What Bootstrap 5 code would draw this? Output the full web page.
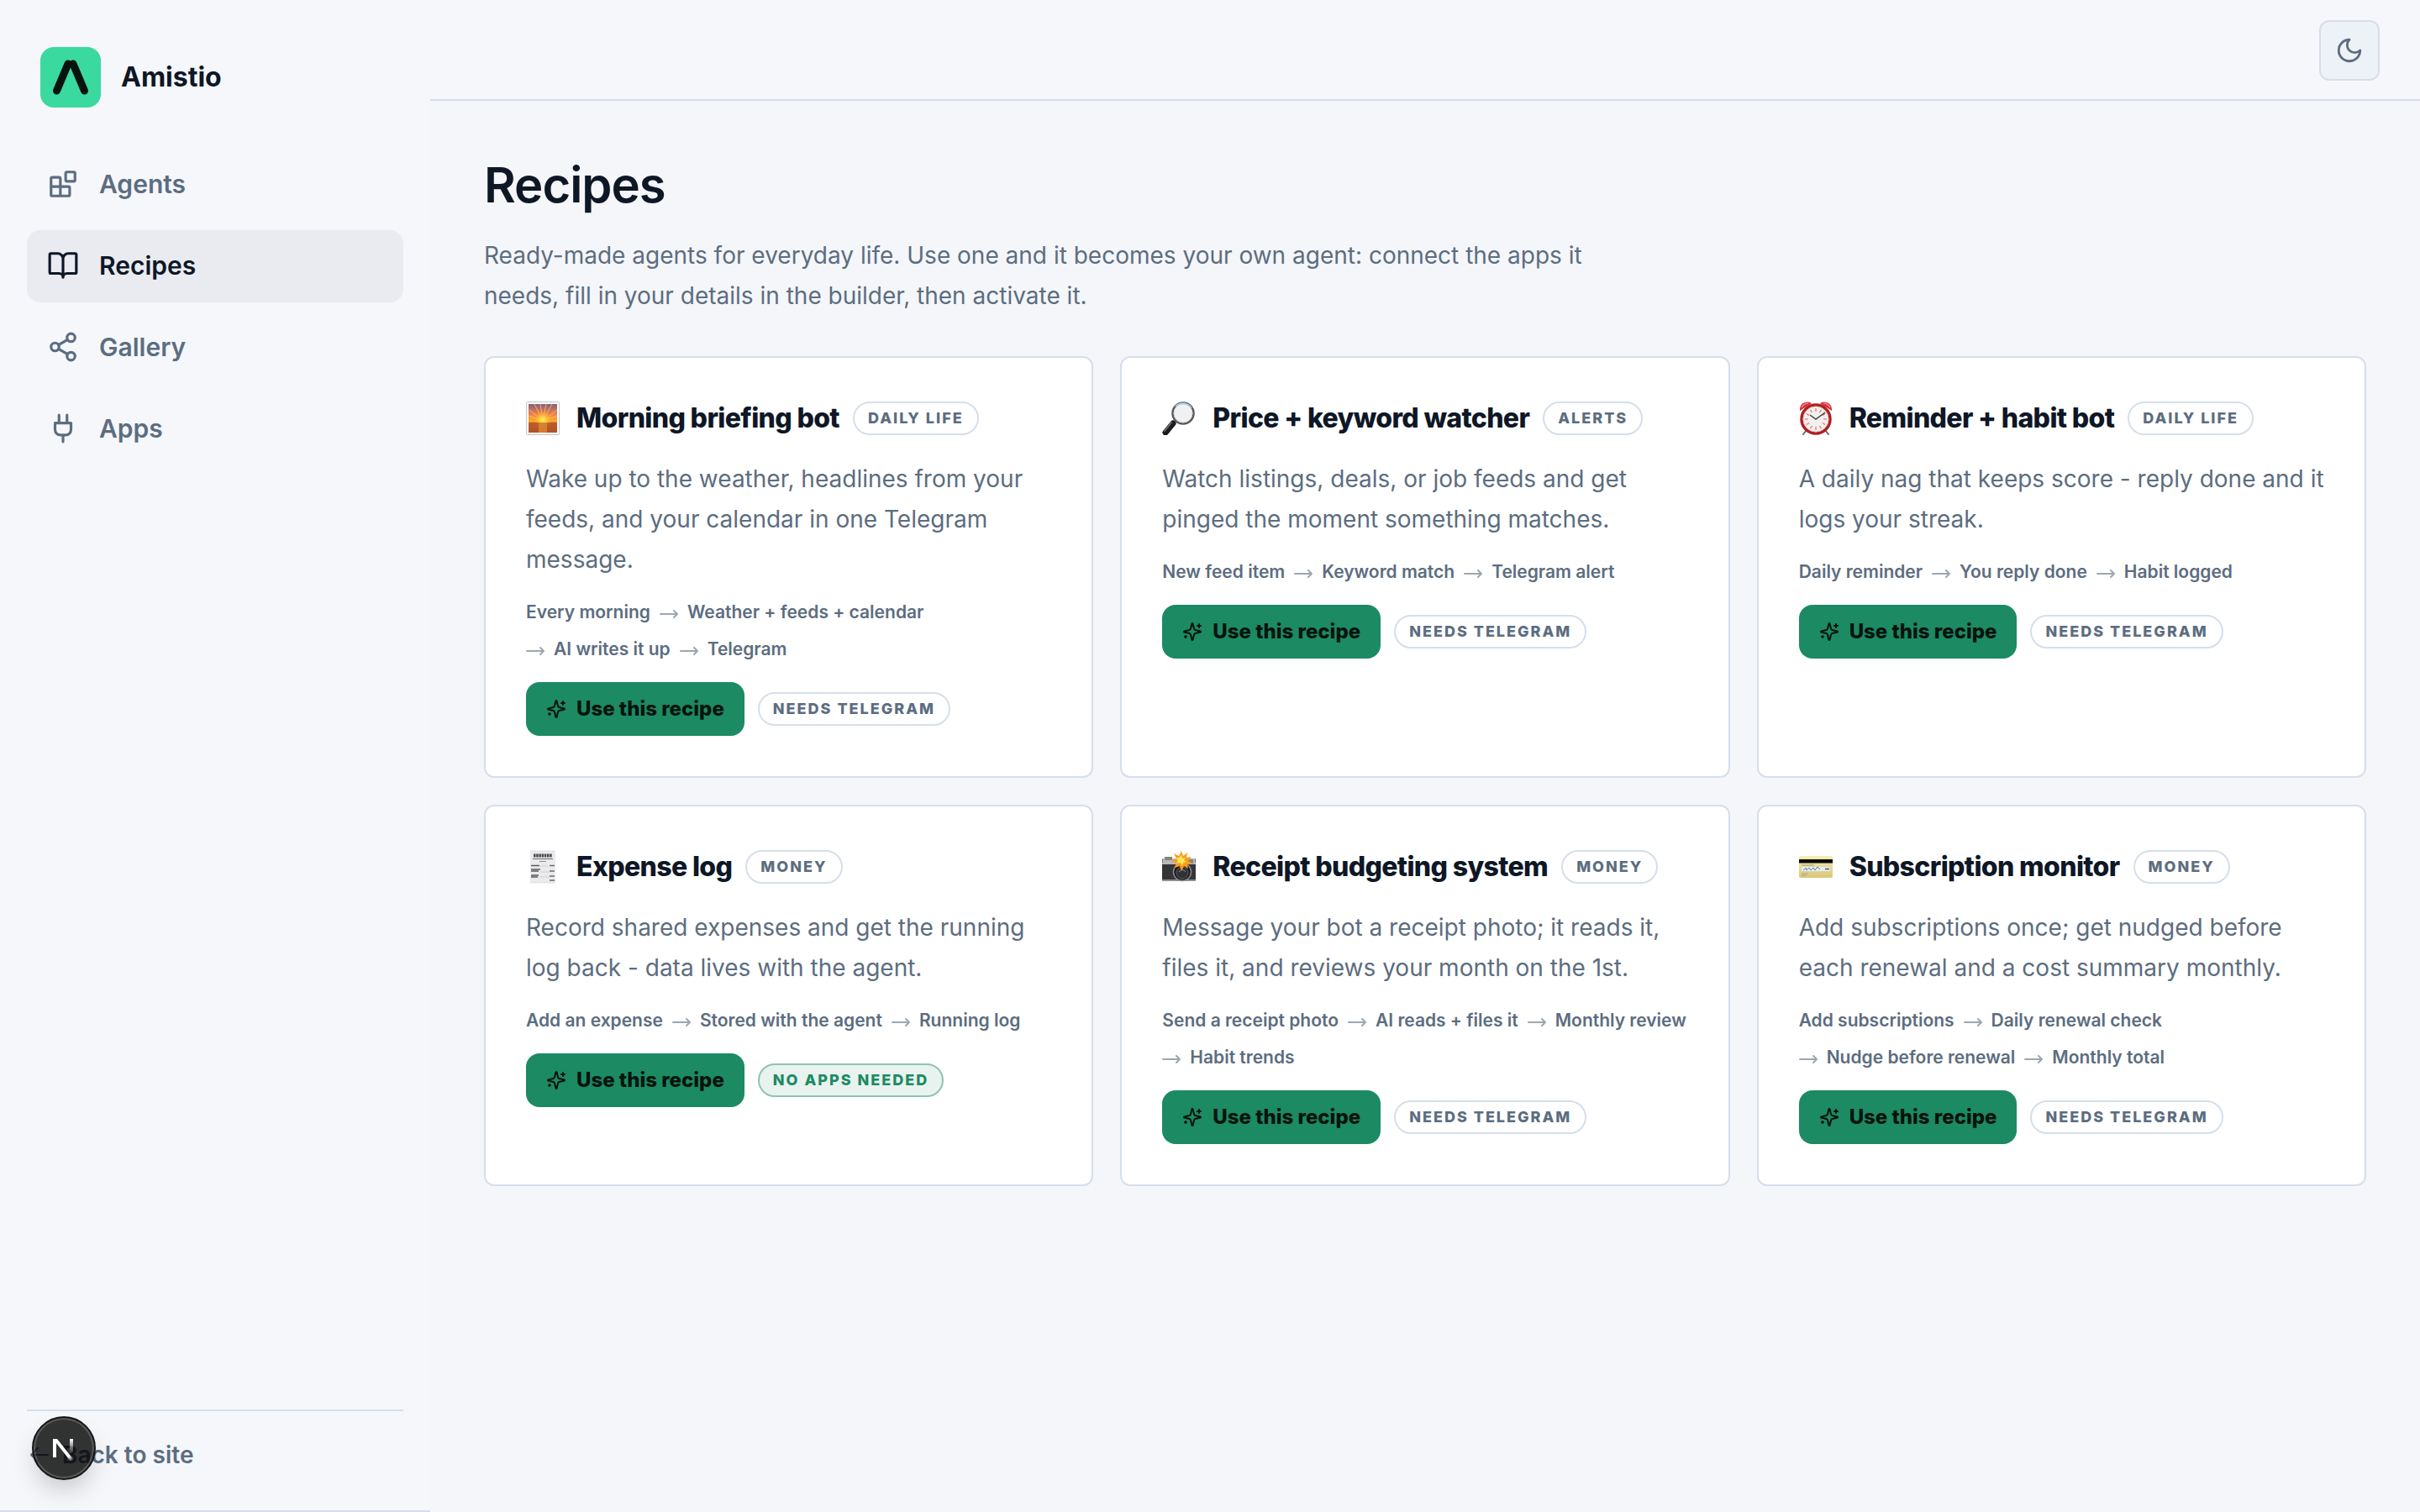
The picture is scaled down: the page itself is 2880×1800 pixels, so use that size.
<!DOCTYPE html>
<html lang="en">
<head>
<meta charset="utf-8">
<meta name="viewport" content="width=device-width, initial-scale=1">
<title>Recipes · Amistio</title>
<link href="https://cdn.jsdelivr.net/npm/bootstrap@5.3.0/dist/css/bootstrap.min.css" rel="stylesheet">
<style>
  :root { --ink: #0e1726; --soft: #5c6d80; --line: #d6deea; --green: #1c8a62; }
  body { font-family: Inter, "Liberation Sans", sans-serif; font-size: 28px; line-height: 48px; color: var(--ink); background: #f4f6fa; }
  a { text-decoration: none; }
  .ico { fill: none; stroke: currentColor; stroke-width: 2; stroke-linecap: round; stroke-linejoin: round; flex: none; }
  .side { width: 512px; padding: 56px 32px 42px; background: #f5f7fb; border-bottom: 2px solid var(--line); }
  .brand { gap: 24px; padding: 0 16px; font-size: 32px; line-height: 72px; font-weight: 700; color: var(--ink); }
  .side-nav { gap: 11px; margin-top: 49px; }
  .side-nav .nav-link { display: flex; align-items: center; gap: 24px; padding: 17px 24px 19px; font-size: 30px; line-height: 50px; font-weight: 600; color: var(--soft); border-radius: 16px; }
  .side-nav .nav-link.active { color: var(--ink); background: #e9ebf0; }
  .side-foot { border-top: 2px solid var(--line); padding: 28px 4px 0; }
  .side-foot a { gap: 16px; font-size: 28px; font-weight: 600; color: var(--soft); }
  .topbar { padding: 24px 48px 22px; background: #f5f7fb; border-bottom: 2px solid var(--line); }
  .theme-btn { width: 72px; height: 72px; padding: 0; border: 2px solid var(--line); border-radius: 12px; background: #edf2f7; color: var(--soft); }
  .content { padding: 64px; }
  .content h1 { font-size: 58px; line-height: 72px; font-weight: 600; letter-spacing: -1px; margin: 0 0 24px; }
  .intro { max-width: 1360px; margin: 0 0 48px; color: var(--soft); }
  .recipes { display: grid; grid-template-columns: repeat(3, minmax(0, 1fr)); gap: 32px; }
  .recipe { border: 2px solid var(--line); border-radius: 12px; background: #fff; padding: 48px; }
  .recipe h2 { font-size: 32px; line-height: 48px; font-weight: 800; letter-spacing: -.02em; margin: 0; }
  .recipe-head { gap: 16px; margin-bottom: 24px; }
  .recipe-head svg { width: 40px; height: 40px; margin-right: 4px; flex: none; }
  .recipe p { color: var(--soft); margin: 0 0 23px; }
  .steps { gap: 12px 11px; margin: 0 0 23px; padding: 0; list-style: none; font-size: 21px; line-height: 32px; font-weight: 600; color: var(--soft); }
  .steps li { display: flex; align-items: center; gap: 11px; }
  .steps svg { opacity: .6; }
  .tag { border: 2px solid var(--line); border-radius: 20px; padding: 0 16px; font-size: 18px; line-height: 36px; font-weight: 800; letter-spacing: 2px; color: var(--soft); }
  .tag-ok { color: var(--green); border-color: #8ec4b0; background: #e8f3ef; }
  .use-btn { display: flex; align-items: center; gap: 12px; height: 64px; padding: 0 24px; border: 0; border-radius: 16px; background: var(--green); color: #07130e; font-size: 24px; line-height: 32px; font-weight: 800; }
  .dev-badge { position: fixed; left: 38px; bottom: 38px; width: 76px; height: 76px; padding: 0; border: 2px solid #171717; border-radius: 50%; background: rgba(0, 0, 0, .8); box-shadow: inset 0 0 0 2px rgba(255, 255, 255, .2), 0 16px 32px -8px rgba(0, 0, 0, .24); }
</style>
</head>
<body>
<svg width="0" height="0" class="position-absolute" aria-hidden="true">
  <symbol id="spark" viewBox="0 0 24 24"><path d="M9.937 15.5A2 2 0 0 0 8.5 14.063l-6.135-1.582a.5.5 0 0 1 0-.962L8.5 9.936A2 2 0 0 0 9.937 8.5l1.582-6.135a.5.5 0 0 1 .963 0L14.063 8.5A2 2 0 0 0 15.5 9.937l6.135 1.581a.5.5 0 0 1 0 .964L15.5 14.063a2 2 0 0 0-1.437 1.437l-1.582 6.135a.5.5 0 0 1-.963 0zM20 3v4M22 5h-4M4 17v2M5 18H3"/></symbol>
  <symbol id="next" viewBox="0 0 22 16"><path d="M1 10h20M17 6l4 4-4 4"/></symbol>
</svg>
<div class="d-flex min-vh-100">
  <aside class="side d-flex flex-column flex-shrink-0">
    <a href="#" class="brand d-flex align-items-center">
      <svg width="72" height="72" viewBox="0 0 72 72" aria-hidden="true"><rect width="72" height="72" rx="16" fill="#3ad9a0"/><path d="M33 20 19.500 52M39 20 52.500 52" fill="none" stroke="#07130e" stroke-width="9" stroke-linecap="round"/></svg>
      <span>Amistio</span>
    </a>
    <nav class="side-nav nav flex-column" aria-label="Main">
      <a class="nav-link" href="#"><svg class="ico" width="38" height="38" viewBox="0 0 24 24"><rect width="7" height="7" x="14" y="3" rx="1"/><path d="M10 21V8a1 1 0 0 0-1-1H4a1 1 0 0 0-1 1v12a1 1 0 0 0 1 1h12a1 1 0 0 0 1-1v-5a1 1 0 0 0-1-1H3"/></svg>Agents</a>
      <a class="nav-link active" href="#" aria-current="page"><svg class="ico" width="38" height="38" viewBox="0 0 24 24"><path d="M12 7v14M3 18a1 1 0 0 1-1-1V4a1 1 0 0 1 1-1h5a4 4 0 0 1 4 4 4 4 0 0 1 4-4h5a1 1 0 0 1 1 1v13a1 1 0 0 1-1 1h-6a3 3 0 0 0-3 3 3 3 0 0 0-3-3z"/></svg>Recipes</a>
      <a class="nav-link" href="#"><svg class="ico" width="38" height="38" viewBox="0 0 24 24"><circle cx="18" cy="5" r="3"/><circle cx="6" cy="12" r="3"/><circle cx="18" cy="19" r="3"/><path d="m8.590 13.510 6.830 3.980M15.410 6.510l-6.820 3.980"/></svg>Gallery</a>
      <a class="nav-link" href="#"><svg class="ico" width="38" height="38" viewBox="0 0 24 24"><path d="M12 22v-5M9 8V2M15 8V2M18 8v5a4 4 0 0 1-4 4h-4a4 4 0 0 1-4-4V8Z"/></svg>Apps</a>
    </nav>
    <div class="side-foot mt-auto"><a class="d-flex align-items-center" href="#"><svg class="ico" width="22" height="22" viewBox="0 0 22 22" aria-hidden="true"><path d="M21 11H1M9 3l-8 8 8 8"/></svg>Back to site</a></div>
  </aside>
  <div class="flex-grow-1">
    <header class="topbar d-flex justify-content-end">
      <button type="button" class="theme-btn d-flex align-items-center justify-content-center" aria-label="Dark theme"><svg class="ico" width="34" height="34" viewBox="0 0 24 24"><path d="M12 3a6 6 0 0 0 9 9 9 9 0 1 1-9-9Z"/></svg></button>
    </header>
    <main class="content">
      <h1>Recipes</h1>
      <p class="intro">Ready-made agents for everyday life. Use one and it becomes your own agent: connect the apps it needs, fill in your details in the builder, then activate it.</p>
      <div class="recipes">
        <article class="recipe">
          <div class="recipe-head d-flex align-items-center">
            <svg viewBox="0 0 40 40" aria-hidden="true"><defs><linearGradient id="sky" x2="0" y2="1"><stop stop-color="#85617c"/><stop offset=".35" stop-color="#ef7f4b"/><stop offset=".62" stop-color="#ffb01f"/><stop offset=".64" stop-color="#d9772b"/><stop offset="1" stop-color="#a04a2c"/></linearGradient><radialGradient id="glow"><stop stop-color="#fff36a"/><stop offset=".4" stop-color="#ffc93a"/><stop offset="1" stop-color="#ff9a2e" stop-opacity="0"/></radialGradient></defs><rect x=".5" y=".5" width="39" height="39" rx="1" fill="#fff" stroke="#b9c9c9"/><rect x="3" y="3" width="34" height="34" fill="url(#sky)"/><path d="M20 23 4 10M20 23 10 3M20 23 17 3M20 23 24 3M20 23 31 3M20 23 37 10M20 23 3 17M20 23 37 17" stroke="#ffc46a" stroke-width="1" opacity=".8"/><circle cx="20" cy="22" r="11" fill="url(#glow)"/><rect x="3" y="25" width="34" height="12" fill="#b3562a" opacity=".75"/><rect x="15" y="25" width="10" height="12" fill="#e58a2e" opacity=".7"/></svg>
            <h2>Morning briefing bot</h2><span class="tag">DAILY LIFE</span>
          </div>
          <p>Wake up to the weather, headlines from your feeds, and your calendar in one Telegram message.</p>
          <ul class="steps d-flex flex-wrap"><li>Every morning</li><li><svg class="ico" width="22" height="16"><use href="#next"/></svg>Weather + feeds + calendar</li><li><svg class="ico" width="22" height="16"><use href="#next"/></svg>AI writes it up</li><li><svg class="ico" width="22" height="16"><use href="#next"/></svg>Telegram</li></ul>
          <div class="d-flex align-items-center gap-3"><button type="button" class="use-btn"><svg class="ico" width="24" height="24"><use href="#spark"/></svg>Use this recipe</button><span class="tag">NEEDS TELEGRAM</span></div>
        </article>
        <article class="recipe">
          <div class="recipe-head d-flex align-items-center">
            <svg viewBox="0 0 40 40" aria-hidden="true"><path d="m17 22-3 4" stroke="#9a9a9a" stroke-width="3"/><path d="M13 26 4 37" stroke="#1c1c1e" stroke-width="7" stroke-linecap="round"/><path d="M11 25 3 35" stroke="#66696d" stroke-width="2" stroke-linecap="round"/><circle cx="25" cy="14" r="12.500" fill="#f1f1f3" stroke="#55585c" stroke-width="2.500"/><path d="M16 6a12 12 0 0 1 19 2" fill="none" stroke="#9cc4ec" stroke-width="2"/><circle cx="25" cy="14" r="11" fill="none" stroke="#d4d6d8"/></svg>
            <h2>Price + keyword watcher</h2><span class="tag">ALERTS</span>
          </div>
          <p>Watch listings, deals, or job feeds and get pinged the moment something matches.</p>
          <ul class="steps d-flex flex-wrap"><li>New feed item</li><li><svg class="ico" width="22" height="16"><use href="#next"/></svg>Keyword match</li><li><svg class="ico" width="22" height="16"><use href="#next"/></svg>Telegram alert</li></ul>
          <div class="d-flex align-items-center gap-3"><button type="button" class="use-btn"><svg class="ico" width="24" height="24"><use href="#spark"/></svg>Use this recipe</button><span class="tag">NEEDS TELEGRAM</span></div>
        </article>
        <article class="recipe">
          <div class="recipe-head d-flex align-items-center">
            <svg viewBox="0 0 40 40" aria-hidden="true"><path d="m9 34-4 5M31 34l4 5" stroke="#6a6a6a" stroke-width="2" stroke-linecap="round"/><path d="M1 11C0 3 8-2 15 2zM39 11C40 3 32-2 25 2z" fill="#d5303a"/><path d="M3 7q3-5 8-5M37 7q-3-5-8-5" fill="none" stroke="#ef8388" stroke-width="1.500"/><circle cx="20" cy="21" r="17" fill="#f2f0ee" stroke="#b01f24" stroke-width="3.500"/><circle cx="20" cy="21" r="15" fill="none" stroke="#d9c9c4"/><path d="M20 8v4M20 30v4M7 21h4M29 21h4M13.500 10l2 3M26.500 10l-2 3M13.500 32l2-3M26.500 32l-2-3M9 14.500l3 2M31 14.500l-3 2M9 27.500l3-2M31 27.500l-3-2" stroke="#ee6a5e" stroke-width="1.200"/><path d="m13 16 7 5 11-8" fill="none" stroke="#3e4540" stroke-width="1.500"/></svg>
            <h2>Reminder + habit bot</h2><span class="tag">DAILY LIFE</span>
          </div>
          <p>A daily nag that keeps score - reply done and it logs your streak.</p>
          <ul class="steps d-flex flex-wrap"><li>Daily reminder</li><li><svg class="ico" width="22" height="16"><use href="#next"/></svg>You reply done</li><li><svg class="ico" width="22" height="16"><use href="#next"/></svg>Habit logged</li></ul>
          <div class="d-flex align-items-center gap-3"><button type="button" class="use-btn"><svg class="ico" width="24" height="24"><use href="#spark"/></svg>Use this recipe</button><span class="tag">NEEDS TELEGRAM</span></div>
        </article>
        <article class="recipe">
          <div class="recipe-head d-flex align-items-center">
            <svg viewBox="0 0 40 40" aria-hidden="true"><path d="M5 1h30v38H5z" fill="#ebebed"/><path d="M5 1h30M5 39h30" stroke="#cfcfd2" stroke-dasharray="1 1"/><path d="M9 6.500h22" stroke="#4b4b4d" stroke-width="4" stroke-dasharray="2.500 .7"/><path d="M8 10.500h24" stroke="#6b6b6d"/><path d="M16 13.500h8" stroke="#8b8b8d"/><path d="M6 18.500h10M6 23h11M6 25h9M6 30h9M6 32h8" stroke="#5b5b5d" stroke-width="1.500"/><path d="M17 19h10M18 26h9M16 32h11" stroke="#b5b5b8" stroke-dasharray="1 1"/><path d="M28 18.500h6M28 25h6M28 31h6M28 36h6" stroke="#6b6b6d" stroke-width="1.500"/></svg>
            <h2>Expense log</h2><span class="tag">MONEY</span>
          </div>
          <p>Record shared expenses and get the running log back - data lives with the agent.</p>
          <ul class="steps d-flex flex-wrap"><li>Add an expense</li><li><svg class="ico" width="22" height="16"><use href="#next"/></svg>Stored with the agent</li><li><svg class="ico" width="22" height="16"><use href="#next"/></svg>Running log</li></ul>
          <div class="d-flex align-items-center gap-3"><button type="button" class="use-btn"><svg class="ico" width="24" height="24"><use href="#spark"/></svg>Use this recipe</button><span class="tag tag-ok">NO APPS NEEDED</span></div>
        </article>
        <article class="recipe">
          <div class="recipe-head d-flex align-items-center">
            <svg viewBox="0 0 40 40" aria-hidden="true"><rect y="10" width="40" height="27" rx="1.500" fill="#353537"/><path d="M1 10h38l1 7H0z" fill="#b9b9b5"/><path d="M3 8h9v4H3zM29 11h8v5h-8z" fill="#87877f"/><path d="M0 35h40v2H0z" fill="#8f8f90"/><circle cx="24" cy="26" r="10.500" fill="#1b1b1d" stroke="#8a8a8c" stroke-width="1.500"/><circle cx="24" cy="27" r="7" fill="#303236" stroke="#5d5e61"/><path d="M20 26q4-5 8 0" fill="none" stroke="#8b8f94"/><path d="m23 1 2 6 5-4-1 6 6-1-4 5 5 3-6 1 1 5-5-3-3 6-2-6-6 2 2-6-6-2 6-3-3-6 6 3z" fill="#fb9c1c"/><path d="m23 6 1 4 4-1-2 3 3 2-4 1-1 4-2-4-5 1 2-4-3-2 4-1z" fill="#ffe75c"/></svg>
            <h2>Receipt budgeting system</h2><span class="tag">MONEY</span>
          </div>
          <p>Message your bot a receipt photo; it reads it, files it, and reviews your month on the 1st.</p>
          <ul class="steps d-flex flex-wrap"><li>Send a receipt photo</li><li><svg class="ico" width="22" height="16"><use href="#next"/></svg>AI reads + files it</li><li><svg class="ico" width="22" height="16"><use href="#next"/></svg>Monthly review</li><li><svg class="ico" width="22" height="16"><use href="#next"/></svg>Habit trends</li></ul>
          <div class="d-flex align-items-center gap-3"><button type="button" class="use-btn"><svg class="ico" width="24" height="24"><use href="#spark"/></svg>Use this recipe</button><span class="tag">NEEDS TELEGRAM</span></div>
        </article>
        <article class="recipe">
          <div class="recipe-head d-flex align-items-center">
            <svg viewBox="0 0 40 40" aria-hidden="true"><defs><linearGradient id="plastic" x2="0" y2="1"><stop stop-color="#f4efb4"/><stop offset="1" stop-color="#d8c67c"/></linearGradient></defs><rect y="7" width="40" height="26" rx="2" fill="url(#plastic)"/><path d="M0 11h40v4.500H0z" fill="#0a0a0a"/><path d="M3 18h15" stroke="#a59a69"/><rect x="3" y="20" width="34" height="5" fill="#e9edf0"/><path d="m5 24 3-3 1 3 3-3 2 3 3-3 2 3 3-4 3 3" fill="none" stroke="#4d7fc4"/><path d="M31 22.500h5" stroke="#555" stroke-width="1.500"/><path d="M3 28h8M3 30h6" stroke="#b3a46c"/></svg>
            <h2>Subscription monitor</h2><span class="tag">MONEY</span>
          </div>
          <p>Add subscriptions once; get nudged before each renewal and a cost summary monthly.</p>
          <ul class="steps d-flex flex-wrap"><li>Add subscriptions</li><li><svg class="ico" width="22" height="16"><use href="#next"/></svg>Daily renewal check</li><li><svg class="ico" width="22" height="16"><use href="#next"/></svg>Nudge before renewal</li><li><svg class="ico" width="22" height="16"><use href="#next"/></svg>Monthly total</li></ul>
          <div class="d-flex align-items-center gap-3"><button type="button" class="use-btn"><svg class="ico" width="24" height="24"><use href="#spark"/></svg>Use this recipe</button><span class="tag">NEEDS TELEGRAM</span></div>
        </article>
      </div>
    </main>
  </div>
</div>
<button type="button" class="dev-badge" aria-label="Developer tools"><svg class="d-block" width="72" height="72" viewBox="0 0 72 72" aria-hidden="true"><defs><linearGradient id="nd" x1="36" y1="38" x2="46" y2="51" gradientUnits="userSpaceOnUse"><stop stop-color="#fff"/><stop offset=".6" stop-color="#fff"/><stop offset="1" stop-color="#fff" stop-opacity="0"/></linearGradient><linearGradient id="nr" x1="45" y1="25" x2="45" y2="42" gradientUnits="userSpaceOnUse"><stop stop-color="#fff"/><stop offset="1" stop-color="#fff" stop-opacity="0"/></linearGradient></defs><path d="M23 47V25h5l19 24-3 2.500L27 30v17z" fill="url(#nd)"/><path d="M43 25h4v17h-4z" fill="url(#nr)"/></svg></button>
<script src="https://cdn.jsdelivr.net/npm/bootstrap@5.3.0/dist/js/bootstrap.bundle.min.js"></script>
</body>
</html>
